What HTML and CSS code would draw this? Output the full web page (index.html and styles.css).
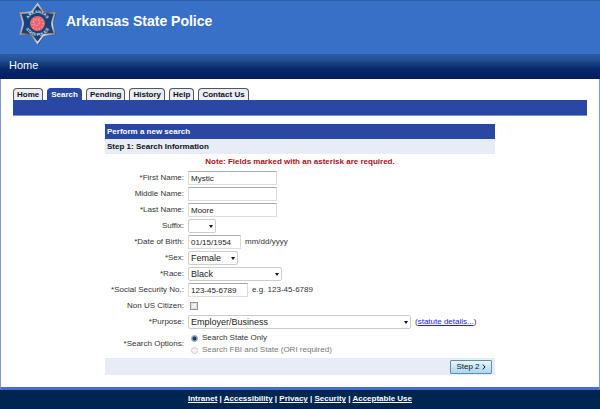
FILE: index.html
```html
<!DOCTYPE html>
<html lang="en">
  <head>
    <meta charset="UTF-8" />
    <meta name="viewport" content="width=device-width, initial-scale=1.0" />
    <title>Arkansas State Police</title>
    <link rel="stylesheet" href="styles.css">
  </head>
  <body>
    <header class="banner">
      <svg class="badge" viewBox="0 0 40 44" aria-hidden="true">
        <defs>
          <linearGradient id="metal" x1="0" y1="0" x2="1" y2="1">
            <stop offset="0" stop-color="#a87a66" />
            <stop offset="0.3" stop-color="#c3c2cc" />
            <stop offset="0.5" stop-color="#755650" />
            <stop offset="0.75" stop-color="#d9d2d4" />
            <stop offset="1" stop-color="#3a2c38" />
          </linearGradient>
          <path id="arcTop" d="M9.500 22a10 10 0 0 1 20 0" />
          <path id="arcBottom" d="M6.500 22a13 13 0 0 0 26 0" />
        </defs>
        <path d="M20.500 3l6 8 12 2-4 10 4 11-12 1-6 9-6-9-12-2 4-10-4-10 12-2z" fill="#1d3f86" opacity="0.6" />
        <path d="M19.500 3l5.500 7.500c4 1.500 8 1.500 11.500 1.500-.5 4-2.500 7-2.500 10.500s2 7 2.500 10.500c-4 0-8 0-11.500 1.500L19.500 42 14 34.500C10.500 33 6.500 33 2.500 33 3 29.500 5 26 5 22.500S3 16 2.500 12c3.500 0 7.500 0 11.500-1.500z" fill="#174277" stroke="url(#metal)" stroke-width="1.800" />
        <circle cx="19.500" cy="22.500" r="7.500" fill="#ec626c" />
        <circle cx="19.500" cy="22.500" r="5.500" fill="none" stroke="#f8a0a2" stroke-width="1.500" stroke-dasharray="1 2" />
        <circle cx="18.500" cy="21.500" r="3" fill="none" stroke="#f69396" stroke-width="1.500" stroke-dasharray="2 1" />
        <text class="badge-text"><textPath href="#arcTop" startOffset="50%">ARKANSAS</textPath></text>
        <text class="badge-text"><textPath href="#arcBottom" startOffset="50%">STATE POLICE</textPath></text>
      </svg>
      <h1>Arkansas State Police</h1>
    </header>
    <nav class="crumb"><a href="#">Home</a></nav>

    <main>
      <nav class="tabs">
        <a href="#">Home</a>
        <a href="#" class="active">Search</a>
        <a href="#">Pending</a>
        <a href="#">History</a>
        <a href="#">Help</a>
        <a href="#">Contact Us</a>
      </nav>
      <div class="tab-bar"></div>

      <form class="panel">
        <h2>Perform a new search</h2>
        <h3>Step 1: Search Information</h3>
        <p class="note">Note: Fields marked with an asterisk are required.</p>

        <div class="row">
          <label for="first">*First Name:</label>
          <input type="text" id="first" class="name" value="Mystic">
        </div>
        <div class="row">
          <label for="middle">Middle Name:</label>
          <input type="text" id="middle" class="name">
        </div>
        <div class="row">
          <label for="last">*Last Name:</label>
          <input type="text" id="last" class="name" value="Moore">
        </div>
        <div class="row">
          <label for="suffix">Suffix:</label>
          <span class="select suffix"><select id="suffix"><option></option><option>Jr</option><option>Sr</option></select></span>
        </div>
        <div class="row">
          <label for="dob">*Date of Birth:</label>
          <input type="text" id="dob" class="dob" value="01/15/1954">
          <span>mm/dd/yyyy</span>
        </div>
        <div class="row">
          <label for="sex">*Sex:</label>
          <span class="select sex"><select id="sex"><option>Female</option><option>Male</option></select></span>
        </div>
        <div class="row">
          <label for="race">*Race:</label>
          <span class="select race"><select id="race"><option>Black</option></select></span>
        </div>
        <div class="row">
          <label for="ssn">*Social Security No.:</label>
          <input type="text" id="ssn" class="ssn" value="123-45-6789">
          <span>e.g. 123-45-6789</span>
        </div>
        <div class="row">
          <label for="citizen">Non US Citizen:</label>
          <input type="checkbox" id="citizen">
        </div>
        <div class="row">
          <label for="purpose">*Purpose:</label>
          <span class="select purpose"><select id="purpose"><option>Employer/Business</option></select></span>
          <span>(<a href="#">statute details...</a>)</span>
        </div>
        <div class="row options" role="radiogroup" aria-labelledby="optionsLabel">
          <span class="caption" id="optionsLabel">*Search Options:</span>
          <div class="choices">
            <label><input type="radio" name="scope" checked> Search State Only</label>
            <label class="off"><input type="radio" name="scope" disabled> Search FBI and State (ORI required)</label>
          </div>
        </div>

        <div class="actions">
          <button type="submit">Step 2
            <svg viewBox="0 0 4 6" aria-hidden="true"><path d="M.8.600L3 3 .8 5.400" /></svg>
          </button>
        </div>
      </form>
    </main>

    <footer>
      <a href="#">Intranet</a> | <a href="#">Accessibility</a> | <a href="#">Privacy</a> | <a href="#">Security</a> | <a href="#">Acceptable Use</a>
    </footer>
  </body>
</html>
```
FILE: styles.css
```css
* {
  box-sizing: border-box;
}

body {
  margin: 0;
  min-height: 100vh;
  display: flex;
  flex-direction: column;
  font-family: "Liberation Sans", Arial, Helvetica, sans-serif;
  font-size: 8px;
  line-height: 12px;
  color: #333;
  background: #fff;
}

h1,
h2,
h3,
p {
  margin: 0;
}

/* Header */
.banner {
  display: flex;
  align-items: flex-start;
  gap: 8px;
  height: 54px;
  padding: 0 18px;
  background: #3870c8;
  border-top: 1px solid #2a5caa;
}

.badge {
  width: 40px;
  height: 44px;
}

.badge-text {
  font-size: 4px;
  font-weight: bold;
  fill: #dfe6f2;
  text-anchor: middle;
}

h1 {
  margin-top: 11px;
  font-size: 14px;
  line-height: 18px;
  color: #fff;
}

.crumb {
  height: 25px;
  padding: 0 9px;
  font-size: 11px;
  line-height: 22px;
  background: linear-gradient(#2a5ea6, #245294 20%, #06286a 60%, #001c60);
}

.crumb a {
  color: #fff;
  text-decoration: none;
}

/* Tabs */
main {
  flex: 1;
  padding: 9px 12px 12px;
  border: solid #7d96d4;
  border-width: 0 1px;
  border-bottom: 3px solid #4470cc;
}

.tabs {
  display: flex;
  gap: 4px;
}

.tabs a {
  height: 12px;
  padding: 0 3px;
  font-weight: bold;
  line-height: 12px;
  color: #111;
  text-decoration: none;
  background: #e8edf8;
  border: 1px solid #555;
  border-bottom: 0;
  border-radius: 4px 4px 0 0;
}

.tabs .active {
  color: #fff;
  background: #2848a4;
  border-color: #2848a4;
}

.tab-bar {
  height: 16px;
  background: #2848a4;
  border-bottom: 1px solid #7c90cc;
}

/* Search form */
.panel {
  max-width: 390px;
  margin: 8px auto 0;
}

h2,
h3 {
  padding: 0 2px;
  font-size: 8px;
  line-height: 15px;
}

h2 {
  color: #fff;
  background: #2848a4;
}

h3 {
  color: #111;
  background: #e7ecf7;
}

.note {
  height: 16px;
  font-weight: bold;
  line-height: 15px;
  text-align: center;
  color: #a8101c;
}

.row {
  display: flex;
  align-items: center;
  gap: 4px;
  height: 16px;
}

.row > label,
.caption {
  width: 79px;
  text-align: right;
  white-space: nowrap;
}

input,
select {
  margin: 0;
  font: inherit;
  color: #222;
}

input[type="text"],
select {
  appearance: none;
  height: 14px;
  padding: 0 2px;
  background: #fff;
  border: 1px solid #ddd;
  border-top-color: #aaa;
  border-radius: 0;
}

.name {
  width: 89px;
}

.dob {
  width: 53px;
}

.ssn {
  width: 60px;
}

.select {
  position: relative;
}

.select select {
  display: block;
  width: 100%;
  font-size: 9px;
  border-color: #ccc;
  border-radius: 2px;
}

/* drop-down arrow */
.select::after {
  content: "";
  position: absolute;
  top: 6px;
  right: 3px;
  border: solid transparent;
  border-width: 3px 2px 0;
  border-top-color: #111;
  pointer-events: none;
}

.suffix {
  width: 28px;
}

.sex {
  width: 50px;
}

.race {
  width: 94px;
}

.purpose {
  width: 223px;
}

.row a {
  color: #2222e0;
}

input[type="checkbox"],
input[type="radio"] {
  appearance: none;
  width: 8px;
  height: 8px;
  background: #f2f2f2;
  border: 1px solid #999;
}

input[type="checkbox"] {
  margin-left: 2px;
  box-shadow: inset 0 0 0 1px #ddd;
}

input[type="radio"] {
  width: 7px;
  height: 7px;
  border-radius: 50%;
}

input[type="radio"]:checked {
  background: radial-gradient(#123f6c 40%, #9fc4dc 75%);
}

input[type="radio"]:disabled {
  border-color: #ccc;
}

.options {
  height: 28px;
}

.choices {
  padding-left: 3px;
}

.choices label {
  display: flex;
  align-items: center;
  gap: 4px;
}

.choices .off {
  color: #777;
}

.actions {
  display: flex;
  justify-content: flex-end;
  height: 17px;
  padding: 2px 3px 1px;
  background: #e7ecf7;
}

button {
  display: flex;
  align-items: center;
  justify-content: center;
  gap: 2px;
  width: 42px;
  padding: 0;
  font: inherit;
  color: #111;
  background: linear-gradient(#e8f6fd, #a8d8f0);
  border: 1px solid #5f8fb0;
  border-radius: 1px;
}

button svg {
  width: 4px;
  height: 6px;
  fill: none;
  stroke: #111;
}

/* Footer */
footer {
  height: 19px;
  font-weight: bold;
  line-height: 18px;
  text-align: center;
  color: #fff;
  background: #002550;
}

footer a {
  color: #fff;
}
```
